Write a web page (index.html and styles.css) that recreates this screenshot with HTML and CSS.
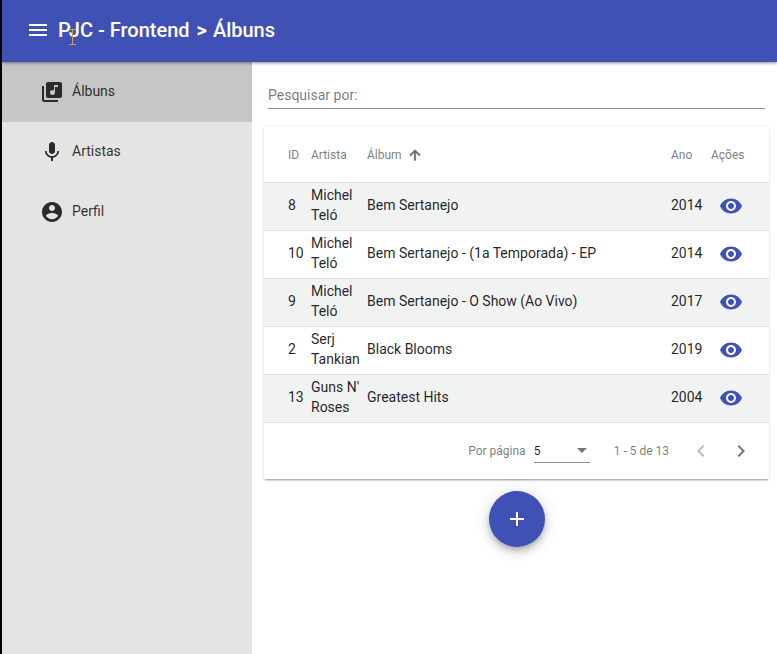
FILE: index.html
```html
<!DOCTYPE html>
<html lang="pt-BR">
<head>
    <meta charset="UTF-8">
    <meta name="viewport" content="width=device-width, initial-scale=1.0">
    <title>PJC - Frontend</title>
    <link rel="stylesheet" href="styles.css">
</head>
<body>
    <div class="app">
        <header class="toolbar">
            <svg class="menu-icon" viewBox="0 0 24 24"><path d="M3 18h18v-2H3v2zm0-5h18v-2H3v2zm0-7v2h18V6H3z"/></svg>
            <span class="toolbar-title">PJC - Frontend <span class="crumb-sep">&gt;</span> Álbuns</span>
            <svg class="text-cursor" viewBox="0 0 9 16"><path d="M1 .5h7M1 15.5h7M4.500 .5v15"/></svg>
        </header>
        <div class="content">
            <nav class="sidenav">
                <a class="nav-item active">
                    <svg class="nav-icon" viewBox="0 0 24 24"><path d="M20 2H8c-1.100 0-2 .9-2 2v12c0 1.100.9 2 2 2h12c1.100 0 2-.9 2-2V4c0-1.100-.9-2-2-2zm-2 5h-3v5.500c0 1.380-1.120 2.500-2.500 2.500S10 13.880 10 12.500s1.120-2.500 2.500-2.500c.57 0 1.080.19 1.500.51V5h4v2zM4 6H2v14c0 1.100.9 2 2 2h14v-2H4V6z"/></svg>
                    <span>Álbuns</span>
                </a>
                <a class="nav-item">
                    <svg class="nav-icon" viewBox="0 0 24 24"><path d="M12 14c1.660 0 2.990-1.340 2.990-3L15 5c0-1.660-1.340-3-3-3S9 3.340 9 5v6c0 1.660 1.340 3 3 3zm5.300-3c0 3-2.540 5.100-5.300 5.100S6.700 14 6.700 11H5c0 3.410 2.720 6.230 6 6.720V21h2v-3.280c3.280-.48 6-3.300 6-6.720h-1.700z"/></svg>
                    <span>Artistas</span>
                </a>
                <a class="nav-item">
                    <svg class="nav-icon" viewBox="0 0 24 24"><path d="M12 2C6.480 2 2 6.480 2 12s4.480 10 10 10 10-4.480 10-10S17.520 2 12 2zm0 3c1.660 0 3 1.340 3 3s-1.340 3-3 3-3-1.340-3-3 1.340-3 3-3zm0 14.200c-2.500 0-4.710-1.280-6-3.220.03-1.990 4-3.080 6-3.080 1.990 0 5.970 1.090 6 3.080-1.290 1.940-3.500 3.220-6 3.220z"/></svg>
                    <span>Perfil</span>
                </a>
            </nav>
            <main class="main">
                <div class="search">Pesquisar por:</div>
                <div class="card">
                    <table class="albums">
                        <thead>
                            <tr>
                                <th class="col-id">ID</th>
                                <th class="col-artist">Artista</th>
                                <th class="col-album"><span class="sort-head">Álbum<svg class="sort-icon" viewBox="0 0 24 24"><path d="M4 12l1.410 1.410L11 7.830V20h2V7.830l5.580 5.590L20 12l-8-8-8 8z"/></svg></span></th>
                                <th class="col-year">Ano</th>
                                <th class="col-actions">Ações</th>
                            </tr>
                        </thead>
                        <tbody>
                            <tr>
                                <td>8</td>
                                <td>Michel Teló</td>
                                <td>Bem Sertanejo</td>
                                <td>2014</td>
                                <td><svg class="eye" viewBox="0 0 24 24"><path d="M12 4.500C7 4.500 2.730 7.610 1 12c1.730 4.390 6 7.500 11 7.500s9.270-3.110 11-7.500c-1.730-4.390-6-7.500-11-7.500zM12 17c-2.760 0-5-2.240-5-5s2.240-5 5-5 5 2.240 5 5-2.240 5-5 5zm0-8c-1.660 0-3 1.340-3 3s1.340 3 3 3 3-1.340 3-3-1.340-3-3-3z"/></svg></td>
                            </tr>
                            <tr>
                                <td>10</td>
                                <td>Michel Teló</td>
                                <td>Bem Sertanejo - (1a Temporada) - EP</td>
                                <td>2014</td>
                                <td><svg class="eye" viewBox="0 0 24 24"><path d="M12 4.500C7 4.500 2.730 7.610 1 12c1.730 4.390 6 7.500 11 7.500s9.270-3.110 11-7.500c-1.730-4.390-6-7.500-11-7.500zM12 17c-2.760 0-5-2.240-5-5s2.240-5 5-5 5 2.240 5 5-2.240 5-5 5zm0-8c-1.660 0-3 1.340-3 3s1.340 3 3 3 3-1.340 3-3-1.340-3-3-3z"/></svg></td>
                            </tr>
                            <tr>
                                <td>9</td>
                                <td>Michel Teló</td>
                                <td>Bem Sertanejo - O Show (Ao Vivo)</td>
                                <td>2017</td>
                                <td><svg class="eye" viewBox="0 0 24 24"><path d="M12 4.500C7 4.500 2.730 7.610 1 12c1.730 4.390 6 7.500 11 7.500s9.270-3.110 11-7.500c-1.730-4.390-6-7.500-11-7.500zM12 17c-2.760 0-5-2.240-5-5s2.240-5 5-5 5 2.240 5 5-2.240 5-5 5zm0-8c-1.660 0-3 1.340-3 3s1.340 3 3 3 3-1.340 3-3-1.340-3-3-3z"/></svg></td>
                            </tr>
                            <tr>
                                <td>2</td>
                                <td>Serj Tankian</td>
                                <td>Black Blooms</td>
                                <td>2019</td>
                                <td><svg class="eye" viewBox="0 0 24 24"><path d="M12 4.500C7 4.500 2.730 7.610 1 12c1.730 4.390 6 7.500 11 7.500s9.270-3.110 11-7.500c-1.730-4.390-6-7.500-11-7.500zM12 17c-2.760 0-5-2.240-5-5s2.240-5 5-5 5 2.240 5 5-2.240 5-5 5zm0-8c-1.660 0-3 1.340-3 3s1.340 3 3 3 3-1.340 3-3-1.340-3-3-3z"/></svg></td>
                            </tr>
                            <tr>
                                <td>13</td>
                                <td>Guns N' Roses</td>
                                <td>Greatest Hits</td>
                                <td>2004</td>
                                <td><svg class="eye" viewBox="0 0 24 24"><path d="M12 4.500C7 4.500 2.730 7.610 1 12c1.730 4.390 6 7.500 11 7.500s9.270-3.110 11-7.500c-1.730-4.390-6-7.500-11-7.500zM12 17c-2.760 0-5-2.240-5-5s2.240-5 5-5 5 2.240 5 5-2.240 5-5 5zm0-8c-1.660 0-3 1.340-3 3s1.340 3 3 3 3-1.340 3-3-1.340-3-3-3z"/></svg></td>
                            </tr>
                        </tbody>
                    </table>
                    <div class="paginator">
                        <span class="page-label">Por página</span>
                        <div class="page-select">
                            <span>5</span>
                            <i class="select-arrow"></i>
                        </div>
                        <span class="page-range">1 - 5 de 13</span>
                        <svg class="page-btn disabled" viewBox="0 0 24 24"><path d="M15.410 7.410L14 6l-6 6 6 6 1.410-1.410L10.830 12z"/></svg>
                        <svg class="page-btn" viewBox="0 0 24 24"><path d="M10 6L8.590 7.410 13.170 12l-4.580 4.590L10 18l6-6z"/></svg>
                    </div>
                </div>
                <div class="fab-row">
                    <button class="fab"><svg viewBox="0 0 24 24"><path d="M19 13h-6v6h-2v-6H5v-2h6V5h2v6h6v2z"/></svg></button>
                </div>
            </main>
        </div>
    </div>
</body>
</html>
```

FILE: styles.css
```css
html, body {
    height: 100%;
}

body {
    margin: 0;
    font-family: Roboto, "Liberation Sans", sans-serif;
    font-size: 14px;
    color: rgba(0, 0, 0, 0.87);
    background-color: #fff;
    overflow: hidden;
}

.app {
    display: flex;
    flex-direction: column;
    height: 100%;
    border-left: 2px solid #000;
    box-sizing: border-box;
}

.toolbar {
    position: relative;
    z-index: 2;
    display: flex;
    align-items: center;
    height: 62px;
    padding: 0 0 2px 24px;
    box-sizing: border-box;
    background-color: #3f51b5;
    color: #fff;
    box-shadow: 0 1px 3px rgba(0, 0, 0, 0.45);
}

.menu-icon {
    width: 24px;
    height: 24px;
    fill: #fff;
}

.toolbar-title {
    margin-left: 8px;
    font-size: 20px;
    font-weight: 500;
}

.crumb-sep {
    margin: 0 1px 0 2px;
    font-weight: 700;
}

.text-cursor {
    position: absolute;
    left: 66px;
    top: 29px;
    width: 9px;
    height: 16px;
    fill: none;
    stroke: #d9a04a;
    stroke-width: 1;
}

.content {
    display: flex;
    flex: 1;
    min-height: 0;
}

.sidenav {
    width: 250px;
    flex-shrink: 0;
    background-color: #e4e4e2;
}

.nav-item {
    display: flex;
    align-items: center;
    height: 60px;
    padding: 0 0 2px 38px;
    box-sizing: border-box;
    color: rgba(0, 0, 0, 0.8);
}

.nav-item.active {
    background-color: #c6c6c6;
}

.nav-icon {
    width: 24px;
    height: 24px;
    margin-right: 8px;
    fill: #2b2b2b;
    position: relative;
    top: 1px;
}

.main {
    flex: 1;
    padding: 0 8px 0 12px;
}

.search {
    margin: 22px 4px 18px 4px;
    padding-bottom: 1px;
    height: 23px;
    line-height: 23px;
    border-bottom: 1px solid #8f8f8f;
    color: rgba(0, 0, 0, 0.54);
}

.card {
    background-color: #fff;
    box-shadow: 0 2px 2px -1px rgba(0, 0, 0, 0.4), 0 0 3px rgba(0, 0, 0, 0.1);
}

.albums {
    width: 100%;
    table-layout: fixed;
    border-collapse: collapse;
}

.albums th {
    height: 55px;
    padding: 0;
    font-size: 12px;
    font-weight: 400;
    text-align: left;
    color: rgba(0, 0, 0, 0.54);
    border-bottom: 1px solid #e0e0e0;
}

.albums td {
    height: 44px;
    padding: 0 0 3px;
    line-height: 20px;
    border-bottom: 1px solid #e0e0e0;
}

.albums tbody tr:nth-child(odd) {
    background-color: #f1f2f2;
}

.col-id {
    width: 23px;
    padding-left: 24px !important;
}

.albums td:first-child {
    padding-left: 24px;
}

.col-artist {
    width: 56px;
}

.col-year {
    width: 40px;
}

.col-actions {
    width: 58px;
}

.sort-head {
    display: flex;
    align-items: center;
    height: 16px;
}

.sort-icon {
    width: 16px;
    height: 16px;
    margin-left: 5px;
    fill: #666;
    stroke: #666;
    stroke-width: 1;
}

.eye {
    display: block;
    width: 24px;
    height: 24px;
    margin: 1px 0 0 8px;
    fill: #3f51b5;
}

.paginator {
    display: flex;
    align-items: center;
    justify-content: flex-end;
    height: 56px;
    padding-right: 16px;
    font-size: 12px;
    color: rgba(0, 0, 0, 0.54);
}

.page-select {
    display: flex;
    align-items: center;
    justify-content: space-between;
    width: 56px;
    height: 24px;
    margin-left: 8px;
    box-sizing: border-box;
    border-bottom: 1px solid #8f8f8f;
    color: rgba(0, 0, 0, 0.87);
}

.select-arrow {
    width: 0;
    height: 0;
    margin-right: 3px;
    border-left: 5px solid transparent;
    border-right: 5px solid transparent;
    border-top: 5px solid #757575;
}

.page-range {
    margin: 0 20px 0 24px;
}

.page-btn {
    width: 24px;
    height: 24px;
    margin-left: 0;
    fill: #757575;
}

.page-btn.disabled {
    fill: #bdbdbd;
    margin-right: 16px;
}

.fab-row {
    display: flex;
    justify-content: center;
    margin-top: 12px;
}

.fab {
    display: flex;
    align-items: center;
    justify-content: center;
    width: 56px;
    height: 56px;
    padding: 0;
    border: none;
    border-radius: 50%;
    background-color: #3f51b5;
    box-shadow: 0 3px 5px -1px rgba(0, 0, 0, 0.2), 0 6px 10px rgba(0, 0, 0, 0.14), 0 1px 18px rgba(0, 0, 0, 0.12);
}

.fab svg {
    width: 24px;
    height: 24px;
    fill: #fff;
}
```
